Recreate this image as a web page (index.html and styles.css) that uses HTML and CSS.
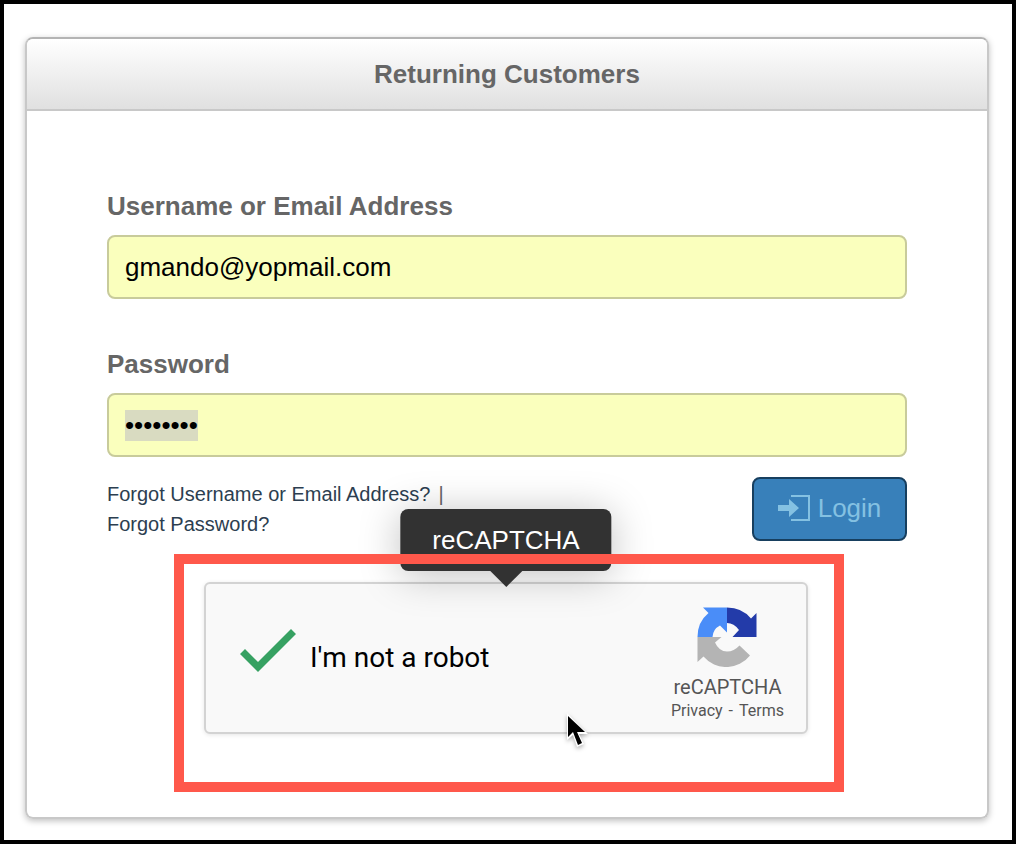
FILE: index.html
```html
<!DOCTYPE html>
<html lang="en">
  <head>
    <meta charset="UTF-8" />
    <meta name="viewport" content="width=device-width, initial-scale=1.0" />
    <title>Returning Customers</title>
    <link rel="stylesheet" href="styles.css">
  </head>
  <body>
    <main class="panel">
      <h2 class="panel-title">Returning Customers</h2>
      <form class="panel-body">
        <div class="field">
          <label for="username">Username or Email Address</label>
          <input type="text" id="username" value="gmando@yopmail.com" />
        </div>
        <div class="field">
          <label for="password">Password</label>
          <input type="password" id="password" value="abcdefgh" />
        </div>

        <div class="actions">
          <div class="links">
            <div class="links-row"><a href="#">Forgot Username or Email Address?</a><span class="sep">|</span></div>
            <div class="links-row"><a href="#">Forgot Password?</a></div>
          </div>
          <button type="button" class="login">
            <svg width="32" height="28" viewBox="0 0 32 28" aria-hidden="true">
              <path d="M13 2H31V26H13" fill="none" stroke="currentColor" stroke-width="2" />
              <path d="M0 11H11V5L21 14L11 23V17H0Z" fill="currentColor" />
            </svg>
            Login
          </button>
        </div>

        <div class="highlight">
          <div class="captcha">
            <div class="tooltip">reCAPTCHA</div>
            <input type="checkbox" id="robot" checked />
            <label for="robot">I'm not a robot</label>
            <div class="brand">
              <svg width="60" height="60" viewBox="0 0 60 60" aria-hidden="true">
                <path fill="#4a8df8" d="M6 .5H30V25.500L23 18.500Q16 22 15.500 30H.5Q.5 15 11.500 6Z" />
                <path fill="#233ba9" d="M30 .5Q45 .5 54 11.500L59.500 6V30H35.500L42 23Q37 16 30 16Z" />
                <path fill="#b4b4b4" d="M.5 30H24.500L18 35.500Q22 44.500 30 44.500Q37 44.500 42.500 38.500L53 48.500A30 30 0 0 1 6.500 49.500L.5 55Z" />
              </svg>
              <div class="brand-name">reCAPTCHA</div>
              <div class="brand-links"><a href="#">Privacy</a><span>-</span><a href="#">Terms</a></div>
            </div>
            <svg class="pointer" width="28" height="40" viewBox="0 0 28 40" aria-hidden="true">
              <path d="M2 0V27L8 22L12 34L19 31L14 21H23Z" fill="#fff" />
              <path d="M3 3V24L8 19L13 32L17 30L12 19H20Z" fill="#000" />
            </svg>
          </div>
        </div>
      </form>
    </main>
    <script>
      document.getElementById("password").select();
    </script>
  </body>
</html>
```
FILE: styles.css
```css
* {
  box-sizing: border-box;
}

body {
  margin: 0;
  min-height: 100vh;
  border: 4px solid #000;
  padding: 33px 23px 21px 21px;
  background: #fff;
  font-family: "Liberation Sans", Arial, sans-serif;
  font-size: 26px;
  line-height: 30px;
  color: #666;
}

a {
  color: inherit;
  text-decoration: none;
}

.panel {
  border: 2px solid #c8c8c8;
  border-top-color: #b4b4b4;
  border-radius: 8px;
  box-shadow: 0 2px 6px rgba(0, 0, 0, 0.25);
}

.panel-title {
  margin: 0;
  padding: 20px;
  border-bottom: 2px solid #c8c8c8;
  border-radius: 6px 6px 0 0;
  background: linear-gradient(#fff, #e0e0e0);
  font-size: 26px;
  text-align: center;
}

.panel-body {
  padding: 80px 80px 25px;
}

.field {
  margin-bottom: 50px;
}

.field + .field {
  margin-bottom: 20px;
}

.field label {
  display: block;
  margin-bottom: 14px;
  font-weight: bold;
}

.field input {
  display: block;
  width: 100%;
  height: 64px;
  padding: 0 16px;
  border: 2px solid #c8cb9b;
  border-radius: 8px;
  outline: none;
  background: #faffbd;
  color: #000;
  font: inherit;
}

.field input::selection {
  background: #d9dbc1;
  color: #000;
}

.actions {
  display: flex;
  justify-content: space-between;
}

.links {
  padding-top: 2px;
  font-size: 20px;
  color: #2c3e50;
}

.links-row {
  display: flex;
  gap: 8px;
}

.sep {
  color: #666;
}

.login {
  display: flex;
  align-items: center;
  justify-content: center;
  gap: 8px;
  width: 155px;
  height: 64px;
  padding: 0 0 2px;
  border: 2px solid #173f5f;
  border-radius: 8px;
  background: #3880ba;
  color: #84c1e2;
  font: inherit;
}

/* red frame around the captcha, drawn above the tooltip */
.highlight {
  position: relative;
  margin: 13px 63px 0 67px;
  padding: 28px 36px 58px 30px;
}

.highlight::after {
  content: "";
  position: absolute;
  inset: 0;
  z-index: 2;
  border: 10px solid #ff584b;
  pointer-events: none;
}

.captcha {
  position: relative;
  display: flex;
  align-items: center;
  gap: 14px;
  height: 152px;
  padding: 0 22px 0 34px;
  border: 2px solid #d3d3d3;
  border-radius: 6px;
  background: #f9f9f9;
  box-shadow: 0 1px 4px rgba(0, 0, 0, 0.1);
  font-family: Roboto, sans-serif;
}

.captcha input {
  appearance: none;
  width: 56px;
  height: 44px;
  margin: 0 0 14px;
}

.captcha input:checked {
  background: #36a162;
  clip-path: polygon(0 25px, 5px 20px, 18px 33px, 51px 0, 56px 5px, 18px 43px);
}

.captcha label {
  font-size: 28px;
  color: #000;
}

.brand {
  margin-left: auto;
  padding-top: 14px;
  text-align: center;
  color: #555;
}

.brand svg {
  display: block;
  margin: 0 auto 8px;
}

.brand-name {
  font-size: 20px;
  line-height: 24px;
}

.brand-links {
  display: flex;
  gap: 6px;
  font-size: 16px;
  line-height: 24px;
}

.tooltip {
  position: absolute;
  left: 50%;
  bottom: calc(100% + 13px);
  z-index: 1;
  padding: 16px 32px;
  border-radius: 8px;
  background: #323232;
  box-shadow: 0 4px 40px rgba(0, 0, 0, 0.25);
  color: #fff;
  font-family: "Liberation Sans", Arial, sans-serif;
  transform: translateX(-50%);
}

.tooltip::after {
  content: "";
  position: absolute;
  top: 100%;
  left: 50%;
  margin-left: -16px;
  border: 16px solid transparent;
  border-top-color: #323232;
  border-bottom: 0;
}

.pointer {
  position: absolute;
  left: 359px;
  top: 129px;
  filter: drop-shadow(0 2px 2px rgba(0, 0, 0, 0.3));
}
```
